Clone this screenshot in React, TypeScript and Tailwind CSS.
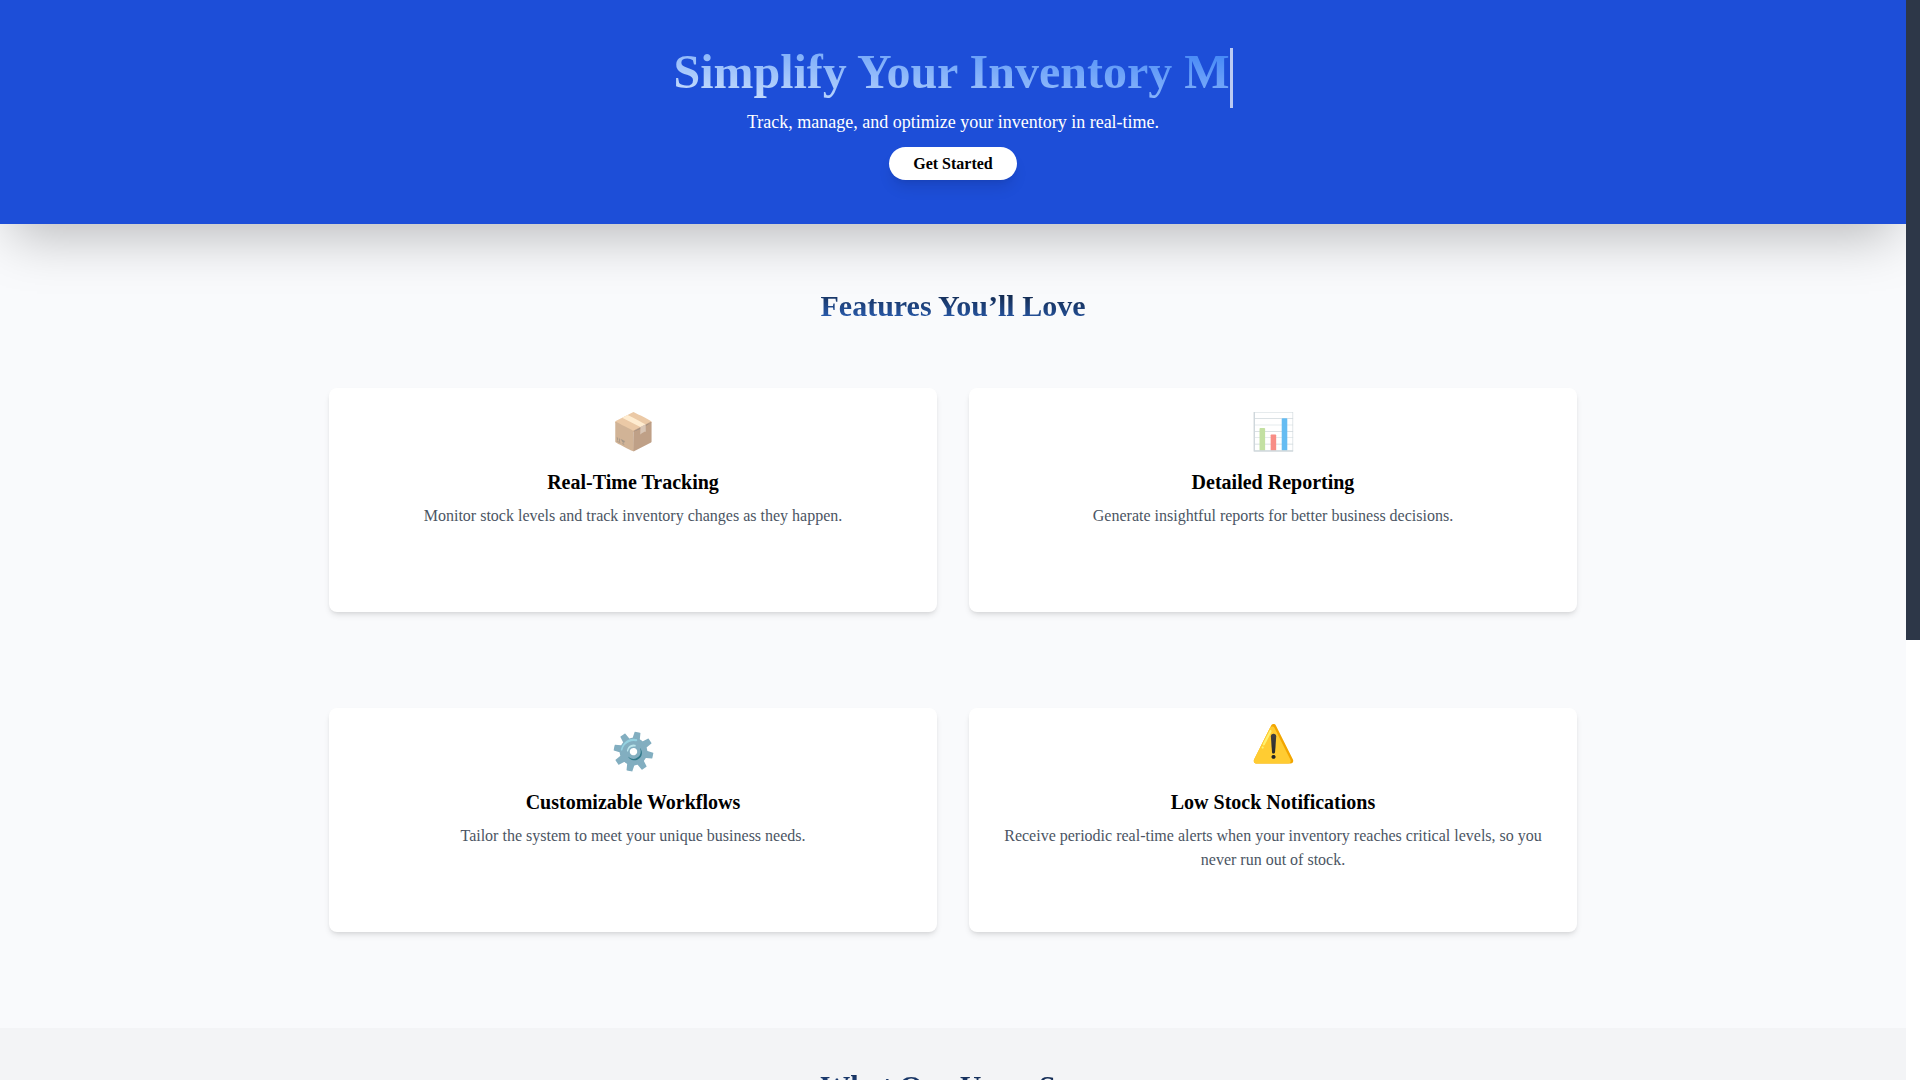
import React from 'react';

interface Feature {
  icon: string;
  title: string;
  description: string;
  iconClass: string;
}

const features: Feature[] = [
  {
    icon: '📦',
    title: 'Real-Time Tracking',
    description: 'Monitor stock levels and track inventory changes as they happen.',
    iconClass: 'mb-4 opacity-60',
  },
  {
    icon: '📊',
    title: 'Detailed Reporting',
    description: 'Generate insightful reports for better business decisions.',
    iconClass: 'mb-4 opacity-60',
  },
  {
    icon: '⚙️',
    title: 'Customizable Workflows',
    description: 'Tailor the system to meet your unique business needs.',
    iconClass: 'mb-4 rotate-12',
  },
  {
    icon: '⚠️',
    title: 'Low Stock Notifications',
    description:
      'Receive periodic real-time alerts when your inventory reaches critical levels, so you never run out of stock.',
    // the alert icon sits at the top of its bounce
    iconClass: '-mt-2 mb-6',
  },
];

const FeatureCard: React.FC<{ feature: Feature }> = ({ feature }) => (
  <div className="h-56 rounded-lg bg-white p-6 text-center shadow-md">
    <div className={`mx-auto w-fit text-4xl ${feature.iconClass}`}>{feature.icon}</div>
    <h3 className="mb-2 text-xl font-bold text-black">{feature.title}</h3>
    <p className="text-base text-[#4b5563]">{feature.description}</p>
  </div>
);

const SectionTitle: React.FC<{ children: React.ReactNode }> = ({ children }) => (
  <h2 className="bg-linear-to-tr/srgb from-[#3b82f6] to-black bg-clip-text text-center text-3xl font-bold text-transparent">
    {children}
  </h2>
);

const App: React.FC = () => {
  return (
    <div className="flex h-screen overflow-hidden font-['Liberation_Serif',serif]">
      <main className="min-w-0 flex-1 overflow-hidden bg-[#f9fafc]">
        <header className="relative bg-[#1d4ed8] p-12 text-center text-white shadow-2xl">
          <h1 className="mx-auto w-fit border-r-3 border-white/70 bg-linear-to-tr/srgb from-[#dbeafe] to-[#3b82f6] bg-clip-text pb-3 text-5xl leading-none font-bold whitespace-nowrap text-transparent">
            Simplify Your Inventory M
          </h1>
          <p className="text-lg">Track, manage, and optimize your inventory in real-time.</p>
          <div className="mt-4">
            <a href="#features" className="rounded-full bg-white px-6 py-2 font-bold text-black shadow-lg">
              Get Started
            </a>
          </div>
        </header>

        <section id="features" className="px-4 pt-16 pb-24">
          <div className="mx-auto max-w-[1248px]">
            <SectionTitle>Features You’ll Love</SectionTitle>
            <div className="mt-16 grid grid-cols-2 gap-x-8 gap-y-24">
              {features.map(feature => (
                <FeatureCard key={feature.title} feature={feature} />
              ))}
            </div>
          </div>
        </section>

        <section className="bg-[#f3f4f6] px-4 py-10">
          <div className="mx-auto max-w-[1248px]">
            <SectionTitle>What Our Users Say</SectionTitle>
          </div>
        </section>
      </main>

      {/* Scroll track */}
      <div className="w-3.5 shrink-0 bg-white" aria-hidden="true">
        <div className="h-[640px] bg-[#2d3748]" />
      </div>
    </div>
  );
};

export default App;
